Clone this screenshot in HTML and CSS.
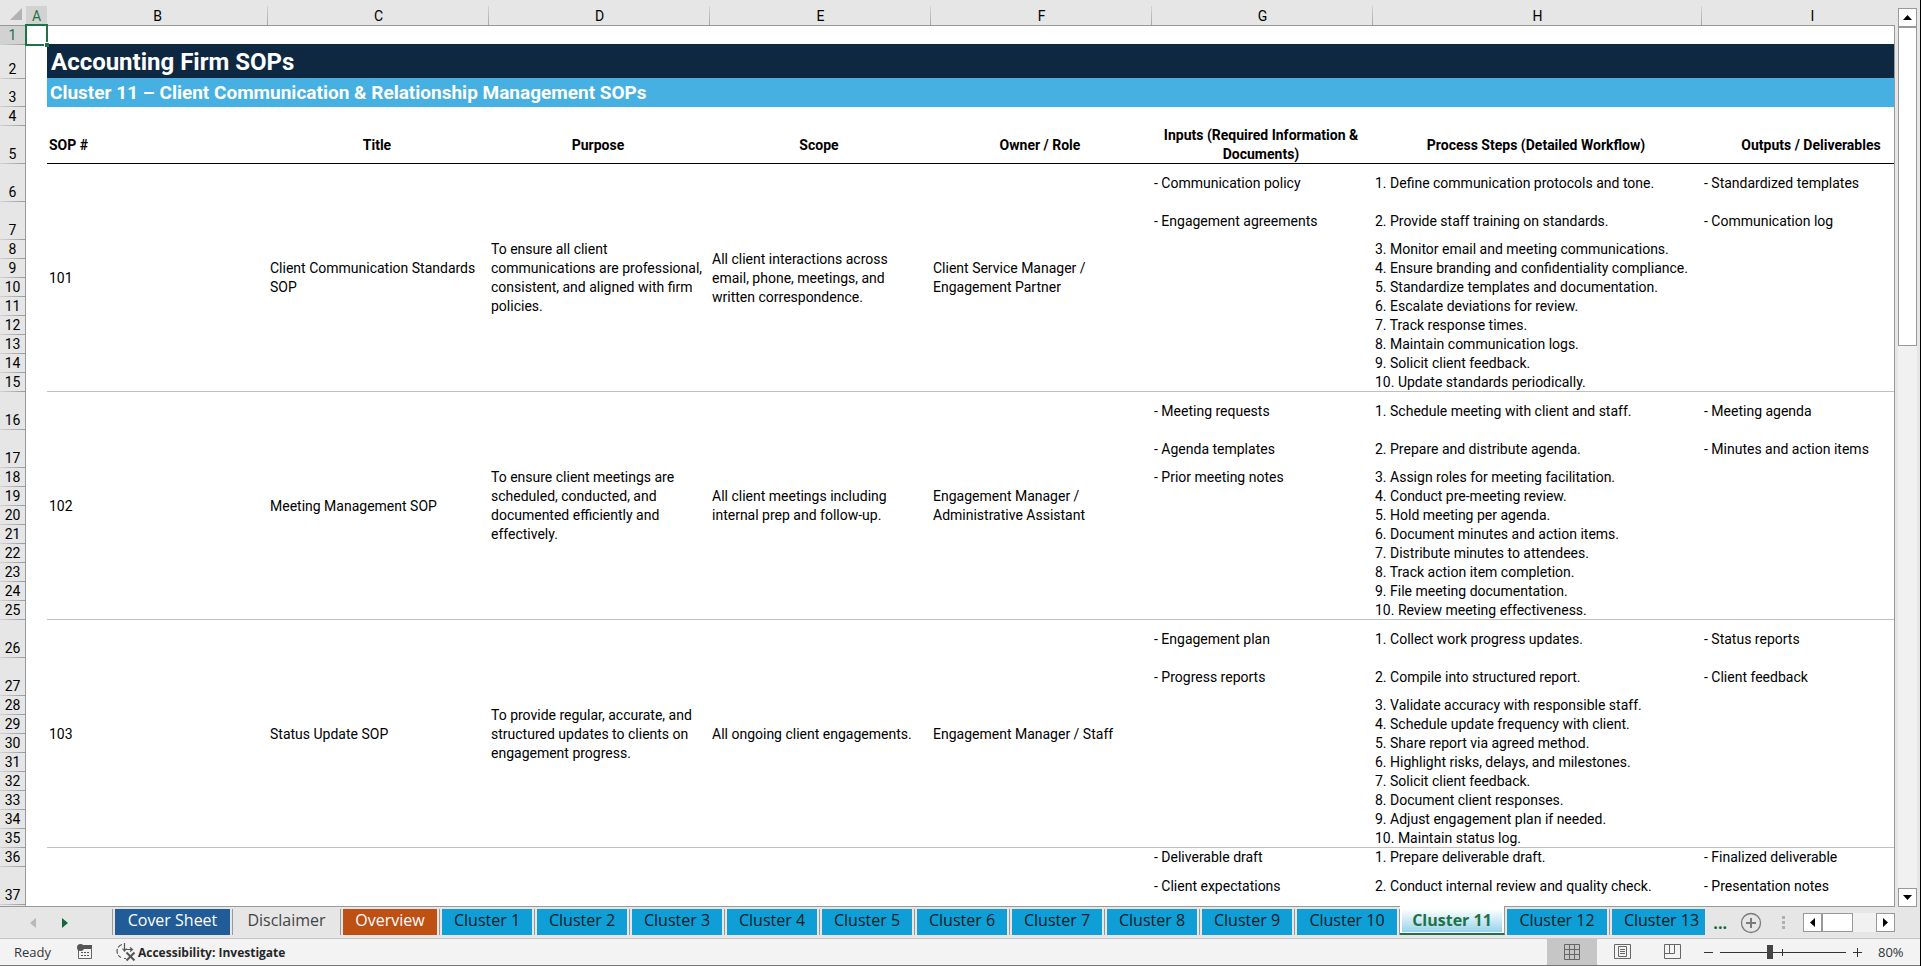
FILE: index.html
```html
<!DOCTYPE html>
<html lang="en">
<head>
  <meta charset="utf-8">
  <title>Accounting Firm SOPs</title>
  <link rel="stylesheet" href="styles.css">
</head>
<body>
  <div class="workspace">
    <main class="sheet">
      <table class="grid">
        <colgroup>
          <col class="col-num">
          <col class="col-a">
          <col class="col-std"><col class="col-std"><col class="col-std">
          <col class="col-std"><col class="col-std"><col class="col-std">
          <col class="col-wide">
          <col class="col-std">
        </colgroup>
        <thead>
          <tr class="letters">
            <th class="corner"><svg width="12" height="12" viewBox="0 0 12 12"><path d="M12 0v12H0z" fill="#b2b2b2"/></svg></th>
            <th class="current">A</th><th>B</th><th>C</th><th>D</th><th>E</th><th>F</th><th>G</th><th>H</th><th>I</th>
          </tr>
        </thead>
        <tbody>
          <tr class="r19"><th class="current">1</th><td class="selected"></td><td colspan="8"></td></tr>
          <tr class="r34"><th>2</th><td></td><td colspan="8" class="title">Accounting Firm SOPs</td></tr>
          <tr class="r28"><th>3</th><td></td><td colspan="8" class="subtitle">Cluster 11 – Client Communication &amp; Relationship Management SOPs</td></tr>
          <tr class="r19"><th>4</th><td></td><td colspan="8"></td></tr>
          <tr class="r38 heads"><th>5</th><td></td><td class="left">SOP #</td><td>Title</td><td>Purpose</td><td>Scope</td><td>Owner / Role</td><td>Inputs (Required Information &amp; Documents)</td><td>Process Steps (Detailed Workflow)</td><td>Outputs / Deliverables</td></tr>

          <!-- 101 -->
          <tr class="r38"><th>6</th><td></td>
            <td rowspan="10" class="end">101</td>
            <td rowspan="10" class="end">Client Communication Standards SOP</td>
            <td rowspan="10" class="end">To ensure all client communications are professional, consistent, and aligned with firm policies.</td>
            <td rowspan="10" class="end">All client interactions across email, phone, meetings, and written correspondence.</td>
            <td rowspan="10" class="end">Client Service Manager / Engagement Partner</td>
            <td>- Communication policy</td><td>1. Define communication protocols and tone.</td><td>- Standardized templates</td></tr>
          <tr class="r38"><th>7</th><td></td><td>- Engagement agreements</td><td>2. Provide staff training on standards.</td><td>- Communication log</td></tr>
          <tr class="r19"><th>8</th><td></td><td></td><td>3. Monitor email and meeting communications.</td><td></td></tr>
          <tr class="r19"><th>9</th><td></td><td></td><td>4. Ensure branding and confidentiality compliance.</td><td></td></tr>
          <tr class="r19"><th>10</th><td></td><td></td><td>5. Standardize templates and documentation.</td><td></td></tr>
          <tr class="r19"><th>11</th><td></td><td></td><td>6. Escalate deviations for review.</td><td></td></tr>
          <tr class="r19"><th>12</th><td></td><td></td><td>7. Track response times.</td><td></td></tr>
          <tr class="r19"><th>13</th><td></td><td></td><td>8. Maintain communication logs.</td><td></td></tr>
          <tr class="r19"><th>14</th><td></td><td></td><td>9. Solicit client feedback.</td><td></td></tr>
          <tr class="r19"><th>15</th><td></td><td class="end"></td><td class="end">10. Update standards periodically.</td><td class="end"></td></tr>

          <!-- 102 -->
          <tr class="r38"><th>16</th><td></td>
            <td rowspan="10" class="end">102</td>
            <td rowspan="10" class="end">Meeting Management SOP</td>
            <td rowspan="10" class="end">To ensure client meetings are scheduled, conducted, and documented efficiently and effectively.</td>
            <td rowspan="10" class="end">All client meetings including internal prep and follow-up.</td>
            <td rowspan="10" class="end">Engagement Manager / Administrative Assistant</td>
            <td>- Meeting requests</td><td>1. Schedule meeting with client and staff.</td><td>- Meeting agenda</td></tr>
          <tr class="r38"><th>17</th><td></td><td>- Agenda templates</td><td>2. Prepare and distribute agenda.</td><td>- Minutes and action items</td></tr>
          <tr class="r19"><th>18</th><td></td><td>- Prior meeting notes</td><td>3. Assign roles for meeting facilitation.</td><td></td></tr>
          <tr class="r19"><th>19</th><td></td><td></td><td>4. Conduct pre-meeting review.</td><td></td></tr>
          <tr class="r19"><th>20</th><td></td><td></td><td>5. Hold meeting per agenda.</td><td></td></tr>
          <tr class="r19"><th>21</th><td></td><td></td><td>6. Document minutes and action items.</td><td></td></tr>
          <tr class="r19"><th>22</th><td></td><td></td><td>7. Distribute minutes to attendees.</td><td></td></tr>
          <tr class="r19"><th>23</th><td></td><td></td><td>8. Track action item completion.</td><td></td></tr>
          <tr class="r19"><th>24</th><td></td><td></td><td>9. File meeting documentation.</td><td></td></tr>
          <tr class="r19"><th>25</th><td></td><td class="end"></td><td class="end">10. Review meeting effectiveness.</td><td class="end"></td></tr>

          <!-- 103 -->
          <tr class="r38"><th>26</th><td></td>
            <td rowspan="10" class="end">103</td>
            <td rowspan="10" class="end">Status Update SOP</td>
            <td rowspan="10" class="end">To provide regular, accurate, and structured updates to clients on engagement progress.</td>
            <td rowspan="10" class="end">All ongoing client engagements.</td>
            <td rowspan="10" class="end">Engagement Manager / Staff</td>
            <td>- Engagement plan</td><td>1. Collect work progress updates.</td><td>- Status reports</td></tr>
          <tr class="r38"><th>27</th><td></td><td>- Progress reports</td><td>2. Compile into structured report.</td><td>- Client feedback</td></tr>
          <tr class="r19"><th>28</th><td></td><td></td><td>3. Validate accuracy with responsible staff.</td><td></td></tr>
          <tr class="r19"><th>29</th><td></td><td></td><td>4. Schedule update frequency with client.</td><td></td></tr>
          <tr class="r19"><th>30</th><td></td><td></td><td>5. Share report via agreed method.</td><td></td></tr>
          <tr class="r19"><th>31</th><td></td><td></td><td>6. Highlight risks, delays, and milestones.</td><td></td></tr>
          <tr class="r19"><th>32</th><td></td><td></td><td>7. Solicit client feedback.</td><td></td></tr>
          <tr class="r19"><th>33</th><td></td><td></td><td>8. Document client responses.</td><td></td></tr>
          <tr class="r19"><th>34</th><td></td><td></td><td>9. Adjust engagement plan if needed.</td><td></td></tr>
          <tr class="r19"><th>35</th><td></td><td class="end"></td><td class="end">10. Maintain status log.</td><td class="end"></td></tr>

          <!-- 104 starts here -->
          <tr class="r19"><th>36</th><td></td><td colspan="5" rowspan="2"></td><td>- Deliverable draft</td><td>1. Prepare deliverable draft.</td><td>- Finalized deliverable</td></tr>
          <tr class="r38"><th>37</th><td></td><td>- Client expectations</td><td>2. Conduct internal review and quality check.</td><td>- Presentation notes</td></tr>
          <tr class="r19"><th></th><td colspan="9"></td></tr>
        </tbody>
      </table>
    </main>

    <div class="vscroll">
      <button type="button" class="arrow" aria-label="Scroll up"><svg width="9" height="5" viewBox="0 0 9 5"><path d="M4.500 0L9 5H0z"/></svg></button>
      <div class="vtrack"><div class="vthumb"></div></div>
      <button type="button" class="arrow" aria-label="Scroll down"><svg width="9" height="5" viewBox="0 0 9 5"><path d="M0 0h9L4.500 5z"/></svg></button>
    </div>
  </div>

  <nav class="tabbar">
    <div class="tabnav">
      <button type="button" aria-label="Previous sheets"><svg width="6" height="10" viewBox="0 0 6 10"><path d="M6 0v10L0 5z" fill="#b8b8b8"/></svg></button>
      <button type="button" aria-label="Next sheets"><svg width="6" height="10" viewBox="0 0 6 10"><path d="M0 0v10l6-5z" fill="#0e6b39"/></svg></button>
    </div>
    <ul class="tabs">
      <li class="cover"><button type="button">Cover Sheet</button></li>
      <li class="disclaimer"><button type="button">Disclaimer</button></li>
      <li class="overview"><button type="button">Overview</button></li>
      <li><button type="button">Cluster 1</button></li>
      <li><button type="button">Cluster 2</button></li>
      <li><button type="button">Cluster 3</button></li>
      <li><button type="button">Cluster 4</button></li>
      <li><button type="button">Cluster 5</button></li>
      <li><button type="button">Cluster 6</button></li>
      <li><button type="button">Cluster 7</button></li>
      <li><button type="button">Cluster 8</button></li>
      <li><button type="button">Cluster 9</button></li>
      <li class="two"><button type="button">Cluster 10</button></li>
      <li class="active"><button type="button">Cluster 11</button></li>
      <li class="two"><button type="button">Cluster 12</button></li>
      <li class="last"><button type="button">Cluster 13</button></li>
    </ul>
    <div class="tabtools">
      <button type="button" class="more">...</button>
      <button type="button" class="add" aria-label="New sheet"><svg width="22" height="22" viewBox="0 0 22 22" fill="none" stroke="#7a7a7a"><circle cx="11" cy="11" r="9.500" stroke-width="1.300"/><path d="M11 6v10M6 11h10" stroke-width="2"/></svg></button>
      <svg class="grip" width="3" height="14" viewBox="0 0 3 14"><path d="M0 0h3v3H0zM0 5h3v3H0zM0 10h3v3H0z" fill="#b0b0b0"/></svg>
      <div class="hscroll">
        <button type="button" class="arrow" aria-label="Scroll left"><svg width="5" height="9" viewBox="0 0 5 9"><path d="M5 0v9L0 4.500z"/></svg></button>
        <div class="htrack"><div class="hthumb"></div></div>
        <button type="button" class="arrow" aria-label="Scroll right"><svg width="5" height="9" viewBox="0 0 5 9"><path d="M0 0v9l5-4.500z"/></svg></button>
      </div>
    </div>
  </nav>

  <footer class="status">
    <span class="ready">Ready</span>
    <button type="button" class="macro" aria-label="Record macro">
      <svg width="16" height="16" viewBox="0 0 16 16"><path d="M5 1h10v4H5z" fill="#555"/><path d="M1.500 6v8.500h13V4" fill="none" stroke="#666"/><circle cx="3.500" cy="3.500" r="3.500" fill="#555"/><path d="M4 8.500h2M7 8.500h2M10 8.500h2M4 11.500h2M7 11.500h2M10 11.500h2" stroke="#555"/></svg>
    </button>
    <button type="button" class="access">
      <svg width="20" height="18" viewBox="0 0 20 18" fill="none" stroke="#555" stroke-width="1.200"><path d="M6 1.500A7 7 0 0 0 5 14.500" stroke-dasharray="5 1.500"/><path d="M8 15.500h2"/><path d="M8.500 0v8M6.500 5.500l2 2.500 2-2.500M10 6.500h6M14 4.500l2.500 2L14 8.500"/><path d="M10.500 9.500l8 8M18.500 9.500l-8 8" stroke-width="2"/></svg>
      Accessibility: Investigate
    </button>
    <div class="views">
      <button type="button" class="on" aria-label="Normal"><svg width="17" height="17" viewBox="0 0 17 17" fill="none" stroke="#666"><path d="M.5.5h15v15H.5zM5.500.5v15M10.500.5v15M.5 5.500h15M.5 10.500h15"/></svg></button>
      <button type="button" aria-label="Page layout"><svg width="17" height="17" viewBox="0 0 17 17" fill="none" stroke="#666"><path d="M.5.5h16v14H.5z"/><path d="M4.500 2.500h8v10h-8zM6 5.500h5M6 7.500h5M6 9.500h5"/></svg></button>
      <button type="button" aria-label="Page break preview"><svg width="17" height="17" viewBox="0 0 17 17" fill="none" stroke="#666"><path d="M.5.5h16v14H.5zM.5 9.500h10v-9M5.500.5v9"/></svg></button>
    </div>
    <div class="zoom">
      <button type="button" aria-label="Zoom out"><svg width="11" height="11" viewBox="0 0 11 11"><path d="M1 5.500h9" stroke="#333"/></svg></button>
      <input type="range" min="0" max="100" value="39" aria-label="Zoom">
      <button type="button" aria-label="Zoom in"><svg width="11" height="11" viewBox="0 0 11 11"><path d="M1 5.500h9M5.500 1v9" stroke="#333"/></svg></button>
      <span class="percent">80%</span>
    </div>
  </footer>
</body>
</html>
```
FILE: styles.css
```css
* {
  box-sizing: border-box;
}
body {
  margin: 0;
  height: 100vh;
  display: flex;
  flex-direction: column;
  overflow: hidden;
  background: #e6e6e6;
  border-right: 1px solid #000;
  font-family: "Open Sans", "Noto Sans", sans-serif;
}
button {
  display: flex;
  align-items: center;
  justify-content: center;
  padding: 0;
  border: 0;
  background: none;
  font: inherit;
  color: inherit;
}
svg {
  display: block;
  flex: none;
}

/* worksheet */
.workspace {
  flex: 1;
  min-height: 0;
  display: flex;
}
.sheet {
  flex: 1;
  min-width: 0;
  overflow: hidden;
  background: #fff;
  border-bottom: 1px solid #999;
}
.grid {
  width: 100%;
  min-width: 1923px;
  table-layout: fixed;
  border-collapse: separate;
  border-spacing: 0;
  font: 14px/19px Roboto, sans-serif;
  color: #000;
}
.col-num { width: 26px; }
.col-a { width: 21px; }
.col-std { width: 221px; }
.col-wide { width: 329px; }
.r19 { height: 19px; }
.r28 { height: 28px; }
.r34 { height: 34px; }
.r38 { height: 38px; }

.grid th {
  padding: 0;
  font-weight: normal;
  background: linear-gradient(to right, #d4d4d4, #999) bottom / 100% 1px no-repeat #e6e6e6;
}
.grid tbody th {
  vertical-align: bottom;
  line-height: 19px;
  border-right: 1px solid #999;
}
.grid td {
  padding: 0 5px 0 2px;
  vertical-align: middle;
  text-align: left;
}
.grid .letters th {
  height: 26px;
  padding-top: 7px;
  line-height: 18px;
  border-bottom: 1px solid #999;
  background: linear-gradient(#d4d4d4, #999) right 6px / 1px 100% no-repeat #e6e6e6;
}
.grid .letters .corner {
  padding: 3px 0 0 10px;
  background: #e6e6e6;
}
.grid .letters .current {
  background: linear-gradient(#d2d2d2, #d2d2d2) 0 6px no-repeat #e6e6e6;
  color: #1f7246;
}
.grid tbody .current {
  background-color: #d2d2d2;
  color: #1f7246;
}
.selected {
  position: relative;
}
.selected::before {
  content: "";
  position: absolute;
  inset: -2px -1px -1px -1px;
  border: 2px solid #1f7246;
}
.selected::after {
  content: "";
  position: absolute;
  right: -2px;
  bottom: -2px;
  width: 4px;
  height: 4px;
  background: #1f7246;
  box-shadow: -1px -1px 0 #fff;
}
.grid .title {
  padding-left: 4px;
  background: #0f2841;
  box-shadow: 0 -1px 0 #0f2841;
  color: #fff;
  font-size: 24px;
  line-height: 30px;
  font-weight: bold;
}
.grid .subtitle {
  padding-left: 3px;
  background: #45b0e1;
  box-shadow: 0 -1px 0 #45b0e1;
  color: #fff;
  font-size: 19px;
  line-height: 24px;
  font-weight: bold;
}
.heads td {
  font-weight: bold;
  text-align: center;
}
.grid .heads .left {
  text-align: left;
}
.heads td:nth-child(n+3) {
  box-shadow: inset 0 -1px 0 #000;
}
.grid .end {
  box-shadow: inset 0 -1px 0 #bfbfbf;
}

/* scrollbars */
.arrow {
  flex: none;
  width: 19px;
  height: 19px;
  background: #fff;
  border: 1px solid #999;
}
.vscroll {
  width: 26px;
  padding: 8px 3px 0 4px;
  display: flex;
  flex-direction: column;
  background: linear-gradient(#999, #999) 0 25px / 1px 100% no-repeat;
}
.vtrack {
  flex: 1;
  background: #f1f1f1;
}
.vthumb {
  height: 37%;
  background: #fff;
  border: 1px solid #999;
}
.hscroll {
  width: 92px;
  display: flex;
}
.htrack {
  flex: 1;
  background: #f1f1f1;
}
.hthumb {
  width: 31px;
  height: 19px;
  background: #fff;
  border: 1px solid #999;
}

/* sheet tabs */
.tabbar {
  flex: none;
  height: 32px;
  display: flex;
  align-items: flex-start;
  border-bottom: 1px solid #c6c6c6;
  font-size: 16px;
}
.tabnav {
  width: 112px;
  height: 31px;
  padding-left: 30px;
  display: flex;
  gap: 26px;
}
.tabs {
  display: flex;
  margin: 0;
  padding: 2px 0 0;
  list-style: none;
}
.tabs li {
  flex: none;
  width: 95px;
  height: 26px;
  padding: 0 2px;
  border-right: 1px solid #999;
}
.tabs button {
  width: 100%;
  height: 26px;
  padding-bottom: 4px;
  background: #0f9ed5;
  color: #061c26;
  white-space: nowrap;
}
.tabs .cover {
  width: 121px;
  border-left: 1px solid #999;
}
.tabs .cover button {
  background: #215c98;
  color: #fff;
}
.tabs .disclaimer {
  width: 108px;
}
.tabs .disclaimer button {
  background: none;
  color: #444;
}
.tabs .overview {
  width: 99px;
}
.tabs .overview button {
  background: #be5014;
  color: #fff;
}
.tabs .two {
  width: 105px;
}
.tabs .last {
  width: 97px;
  border-right: 0;
}
.tabs .last button {
  padding-left: 6px;
}
.tabs .active {
  position: relative;
  width: 105px;
  height: 29px;
  margin-top: -3px;
  padding-top: 3px;
  background: #fff;
  border-bottom: 2px solid #1f7246;
}
.tabs .active button {
  height: 23px;
  padding: 0 0 1px;
  background: linear-gradient(#fff, #98d3ec);
  color: #1f7246;
  font-weight: bold;
}
.tabtools {
  height: 31px;
  margin-left: auto;
  padding-right: 25px;
  display: flex;
  align-items: center;
}
.more {
  margin-right: 13px;
  color: #0e6b39;
  font-weight: bold;
}
.grip {
  margin: 0 18px 0 20px;
}

/* status bar */
.status {
  flex: none;
  height: 27px;
  display: flex;
  align-items: center;
  background: #f3f3f3;
  border-bottom: 1px solid #767676;
  font-size: 13px;
  color: #333;
}
.ready {
  width: 77px;
  padding-left: 14px;
}
.access {
  margin-left: 23px;
  gap: 2px;
  font-size: 12px;
  font-weight: bold;
  color: #262626;
}
.views {
  height: 26px;
  margin-left: auto;
  display: flex;
}
.views button {
  width: 50px;
  height: 26px;
}
.views .on {
  background: #c6c6c6;
}
.zoom {
  display: flex;
  align-items: center;
  padding-left: 6px;
}
.zoom input {
  appearance: none;
  width: 126px;
  height: 16px;
  margin: 0 6px;
  background:
    linear-gradient(#333, #333) 0 8px / 100% 1px no-repeat,
    linear-gradient(#333, #333) 62px 5px / 1px 7px no-repeat;
}
.zoom input::-webkit-slider-thumb {
  appearance: none;
  width: 6px;
  height: 14px;
  background: #444;
}
.percent {
  width: 57px;
  padding-left: 15px;
}
```
